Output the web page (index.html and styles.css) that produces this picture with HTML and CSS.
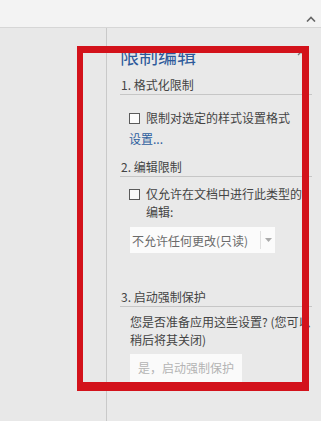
FILE: index.html
```html
<!DOCTYPE html>
<html lang="zh-CN">
<head>
<meta charset="utf-8">
<link rel="stylesheet" href="styles.css">
</head>
<body>
<div class="app">
  <div class="topbar">
    <svg class="chev" width="10" height="6" viewBox="0 0 10 6"><polyline points="1,5.5 5,1.5 9,5.5" fill="none" stroke="#666" stroke-width="1.6"/></svg>
  </div>
  <div class="main">
    <div class="doc"></div>
    <div class="pane">
      <div class="title-row">
        <div class="title">限制编辑</div>
        <svg class="ic-drop" width="6" height="4" viewBox="0 0 6 4"><polygon points="0,0 6,0 3,4" fill="#777"/></svg>
        <svg class="ic-close" width="8" height="8" viewBox="0 0 8 8"><path d="M1 1L7 7M7 1L1 7" stroke="#777" stroke-width="1.3"/></svg>
      </div>
      <div class="heading h1">1. 格式化限制</div>
      <div class="check-row r1">
        <span class="box"></span>
        <span class="label">限制对选定的样式设置格式</span>
      </div>
      <div class="link">设置...</div>
      <div class="heading h2">2. 编辑限制</div>
      <div class="check-row r2">
        <span class="box"></span>
        <span class="label wrap">仅允许在文档中进行此类型的编辑:</span>
      </div>
      <div class="select">
        <span class="sel-text">不允许任何更改(只读)</span>
        <span class="sel-btn"><svg width="7" height="4" viewBox="0 0 7 4"><polygon points="0,0 7,0 3.5,4" fill="#aaa"/></svg></span>
      </div>
      <div class="heading h3">3. 启动强制保护</div>
      <div class="para">您是否准备应用这些设置? (您可以<br>稍后将其关闭)</div>
      <div class="btn">是，启动强制保护</div>
    </div>
  </div>
  <div class="highlight"></div>
</div>
</body>
</html>
```

FILE: styles.css
```css
html, body {
  margin: 0;
  padding: 0;
}
body {
  width: 321px;
  height: 421px;
  overflow: hidden;
  background: #e8e8e8;
  font-family: "Noto Sans CJK SC", "Noto Sans", sans-serif;
  font-size: 12px;
  color: #444;
}
.app {
  position: relative;
  width: 321px;
  height: 421px;
  overflow: hidden;
}
.topbar {
  height: 27px;
  background: #f3f3f3;
  border-bottom: 1px solid #d6d6d6;
  display: flex;
  justify-content: flex-end;
  align-items: flex-start;
  box-sizing: content-box;
}
.chev {
  margin-top: 16px;
  margin-right: 5px;
}
.main {
  display: flex;
  height: 393px;
}
.doc {
  width: 106px;
  flex: none;
  border-right: 1px solid #c9c9c9;
  background: #e8e8e8;
}
.pane {
  flex: 1;
  padding-left: 13px;
  background: #e9e9e9;
  min-width: 0;
}
.title-row {
  display: flex;
  align-items: flex-start;
  margin-top: 16px;
  height: 24px;
}
.title {
  font-size: 19px;
  line-height: 24px;
  color: #2d5a9b;
  width: 137px;
}
.ic-drop {
  margin-top: 5px;
}
.ic-close {
  margin-top: 4px;
  margin-left: 34px;
}
.heading {
  line-height: 18px;
  height: 18px;
  border-bottom: 1px solid #c6c6c6;
  margin-right: 9px;
  padding-left: 1px;
  color: #444;
}
.h1 { margin-top: 8px; }
.h2 { margin-top: 10px; }
.h3 { margin-top: 35px; }
.check-row {
  display: flex;
  align-items: flex-start;
  margin-left: 9px;
  line-height: 18px;
}
.r1 { margin-top: 14px; }
.r2 { margin-top: 8px; }
.box {
  width: 9px;
  height: 9px;
  border: 1px solid #5a5a5a;
  background: #fbfbfb;
  margin-top: 4px;
  margin-right: 6px;
  flex: none;
}
.label {
  white-space: nowrap;
}
.label.wrap {
  white-space: normal;
  width: 160px;
}
.link {
  margin-left: 9px;
  margin-top: 3px;
  line-height: 18px;
  color: #2e5f9e;
}
.select {
  margin-left: 10px;
  margin-top: 6px;
  width: 145px;
  height: 26px;
  background: #fbfbfb;
  display: flex;
  align-items: center;
}
.sel-text {
  flex: 1;
  padding-left: 2px;
  color: #6a6a6a;
  white-space: nowrap;
}
.sel-btn {
  width: 14px;
  height: 18px;
  border-left: 1px solid #e0e0e0;
  display: flex;
  align-items: center;
  justify-content: center;
}
.para {
  margin-left: 10px;
  margin-top: 6px;
  line-height: 18px;
  white-space: nowrap;
  color: #444;
}
.btn {
  margin-left: 10px;
  margin-top: 5px;
  width: 112px;
  height: 28px;
  line-height: 28px;
  background: #fafafa;
  color: #b4b4b4;
  box-sizing: border-box;
  padding-left: 8px;
  white-space: nowrap;
}
.highlight {
  position: absolute;
  left: 77px;
  top: 46px;
  width: 232px;
  height: 345px;
  box-sizing: border-box;
  border-style: solid;
  border-color: #d3121b;
  border-width: 7px 7px 9px 6px;
}
```
